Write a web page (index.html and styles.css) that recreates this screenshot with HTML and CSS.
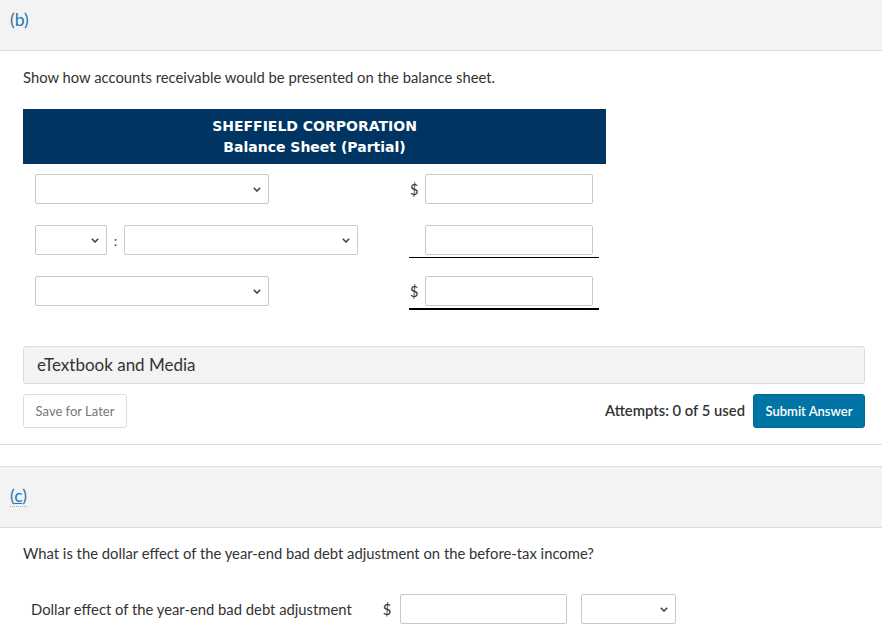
FILE: index.html
```html
<!DOCTYPE html>
<html lang="en">
<head>
<meta charset="utf-8">
<title>Question</title>
<link rel="stylesheet" href="styles.css">
</head>
<body>
<section class="part">
  <div class="part-header"><span class="part-label">(b)</span></div>
  <div class="part-body">
    <p class="question">Show how accounts receivable would be presented on the balance sheet.</p>
    <div class="sheet">
      <div class="sheet-head">
        <div>SHEFFIELD CORPORATION</div>
        <div>Balance Sheet (Partial)</div>
      </div>
      <div class="sheet-row">
        <div class="left">
          <div class="sel w234"><select></select><svg class="chev" viewBox="0 0 8 5" width="8" height="5"><path d="M0.8 0.8 L4 4 L7.2 0.8" fill="none" stroke="#444" stroke-width="1.6"/></svg></div>
        </div>
        <div class="right"><span class="dollar">$</span><input class="amount" type="text"></div>
      </div>
      <div class="sheet-row">
        <div class="left">
          <div class="sel w72"><select></select><svg class="chev" viewBox="0 0 8 5" width="8" height="5"><path d="M0.8 0.8 L4 4 L7.2 0.8" fill="none" stroke="#444" stroke-width="1.6"/></svg></div>
          <span class="colon">:</span>
          <div class="sel w234"><select></select><svg class="chev" viewBox="0 0 8 5" width="8" height="5"><path d="M0.8 0.8 L4 4 L7.2 0.8" fill="none" stroke="#444" stroke-width="1.6"/></svg></div>
        </div>
        <div class="right underline"><span class="dollar"></span><input class="amount" type="text"></div>
      </div>
      <div class="sheet-row">
        <div class="left">
          <div class="sel w234"><select></select><svg class="chev" viewBox="0 0 8 5" width="8" height="5"><path d="M0.8 0.8 L4 4 L7.2 0.8" fill="none" stroke="#444" stroke-width="1.6"/></svg></div>
        </div>
        <div class="right double"><span class="dollar">$</span><input class="amount" type="text"></div>
      </div>
    </div>
    <div class="media-bar">eTextbook and Media</div>
    <div class="actions">
      <button class="btn-save" type="button">Save for Later</button>
      <div class="actions-right">
        <span class="attempts">Attempts: 0 of 5 used</span>
        <button class="btn-submit" type="button">Submit Answer</button>
      </div>
    </div>
  </div>
</section>
<section class="part part-c">
  <div class="part-header c-header"><span class="part-label"><span class="focus">(<u>c</u>)</span></span></div>
  <div class="part-body">
    <p class="question q-c">What is the dollar effect of the year-end bad debt adjustment on the before-tax income?</p>
    <div class="effect-row">
      <span class="effect-label">Dollar effect of the year-end bad debt adjustment</span>
      <span class="effect-dollar">$</span>
      <input class="effect-input" type="text">
      <div class="sel w95"><select></select><svg class="chev" viewBox="0 0 8 5" width="8" height="5"><path d="M0.8 0.8 L4 4 L7.2 0.8" fill="none" stroke="#444" stroke-width="1.6"/></svg></div>
    </div>
  </div>
</section>
</body>
</html>
```
FILE: styles.css
```css
* { box-sizing: border-box; }
html, body { margin: 0; padding: 0; background: #fff; }
body {
  font-family: Lato, "Open Sans", "Liberation Sans", sans-serif;
  color: #333;
  font-size: 14.8px;
  overflow: hidden;
}
.part { border-bottom: 1px solid #dcdcdc; }
.part-header {
  height: 51px;
  background: #f3f3f3;
  border-bottom: 1px solid #dcdcdc;
  padding: 9px 0 0 10px;
}
.part-label {
  font-size: 17.5px;
  line-height: 22px;
  color: #2277b2;
}
.part-body { padding: 0 17px 16px 23px; }
.question {
  margin: 16px 0 0;
  line-height: 20px;
  font-size: 14.8px;
}
.sheet { width: 583px; margin-top: 22px; }
.sheet-head {
  background: #003462;
  color: #fff;
  text-align: center;
  font-family: "DejaVu Sans", "Liberation Sans", sans-serif;
  font-weight: bold;
  font-size: 14px;
  line-height: 21px;
  padding: 7px 0 6px;
  height: 55px;
  margin-bottom: 10px;
}
.sheet-row {
  display: grid;
  grid-template-columns: 374px 190px;
  padding-left: 12px;
  height: 51px;
  align-items: start;
}
.left { display: flex; align-items: center; height: 30px; }
.sel { position: relative; height: 30px; }
.sel select {
  -webkit-appearance: none;
  appearance: none;
  width: 100%;
  height: 30px;
  border: 1px solid #c8c8c8;
  border-radius: 2px;
  background: #fff;
  margin: 0;
  display: block;
}
.chev { position: absolute; right: 8px; top: 13px; pointer-events: none; }
.w234 { width: 234px; }
.w72 { width: 72px; }
.w95 { width: 95px; }
.colon { width: 17px; text-align: center; font-size: 14px; color: #444; }
.right {
  display: flex;
  align-items: center;
  padding-right: 6px;
  padding-bottom: 2px;
}
.dollar { width: 16px; padding-left: 1px; font-size: 14.5px; color: #333; }
.amount {
  width: 168px;
  height: 30px;
  border: 1px solid #c8c8c8;
  border-radius: 2px;
  margin: 0;
  background: #fff;
}
.underline { border-bottom: 1px solid #000; }
.double { border-bottom: 2px solid #000; }
.media-bar {
  margin-top: 19px;
  height: 38px;
  background: #f3f3f3;
  border: 1px solid #dcdcdc;
  border-radius: 3px;
  padding: 0 0 0 13px;
  font-size: 17px;
  line-height: 36px;
  color: #333;
}
.actions {
  margin-top: 10px;
  display: flex;
  justify-content: space-between;
  align-items: center;
}
.btn-save {
  height: 34px;
  width: 104px;
  background: #fff;
  border: 1px solid #dcdcdc;
  border-radius: 3px;
  color: #767676;
  font-family: Lato, "Open Sans", sans-serif;
  font-size: 13px;
  padding: 0;
}
.actions-right { display: flex; align-items: center; gap: 8px; }
.attempts { font-size: 14.8px; font-weight: 600; color: #333; margin-top: -2px; }
.btn-submit {
  height: 34px;
  width: 112px;
  background: #0074a5;
  border: 1px solid #006a97;
  border-radius: 3px;
  color: #fff;
  font-family: Lato, "Open Sans", sans-serif;
  font-size: 13px;
  font-weight: 600;
  padding: 0;
}
.part-c { border-bottom: none; margin-top: 21px; }
.c-header {
  height: 62px;
  border-top: 1px solid #dcdcdc;
  padding-top: 18px;
}
.focus { border-bottom: 1px dotted #8fb8d6; }
.focus u { text-decoration-thickness: 1px; }
.q-c { margin-top: 15px; }
.effect-row {
  display: flex;
  align-items: center;
  margin-top: 31px;
  padding-left: 8px;
}
.effect-label { font-size: 14.8px; }
.effect-dollar { margin-left: 31px; width: 17px; }
.effect-input {
  width: 167px;
  height: 30px;
  border: 1px solid #c8c8c8;
  border-radius: 2px;
  margin: 0 14px 0 0;
}
```
